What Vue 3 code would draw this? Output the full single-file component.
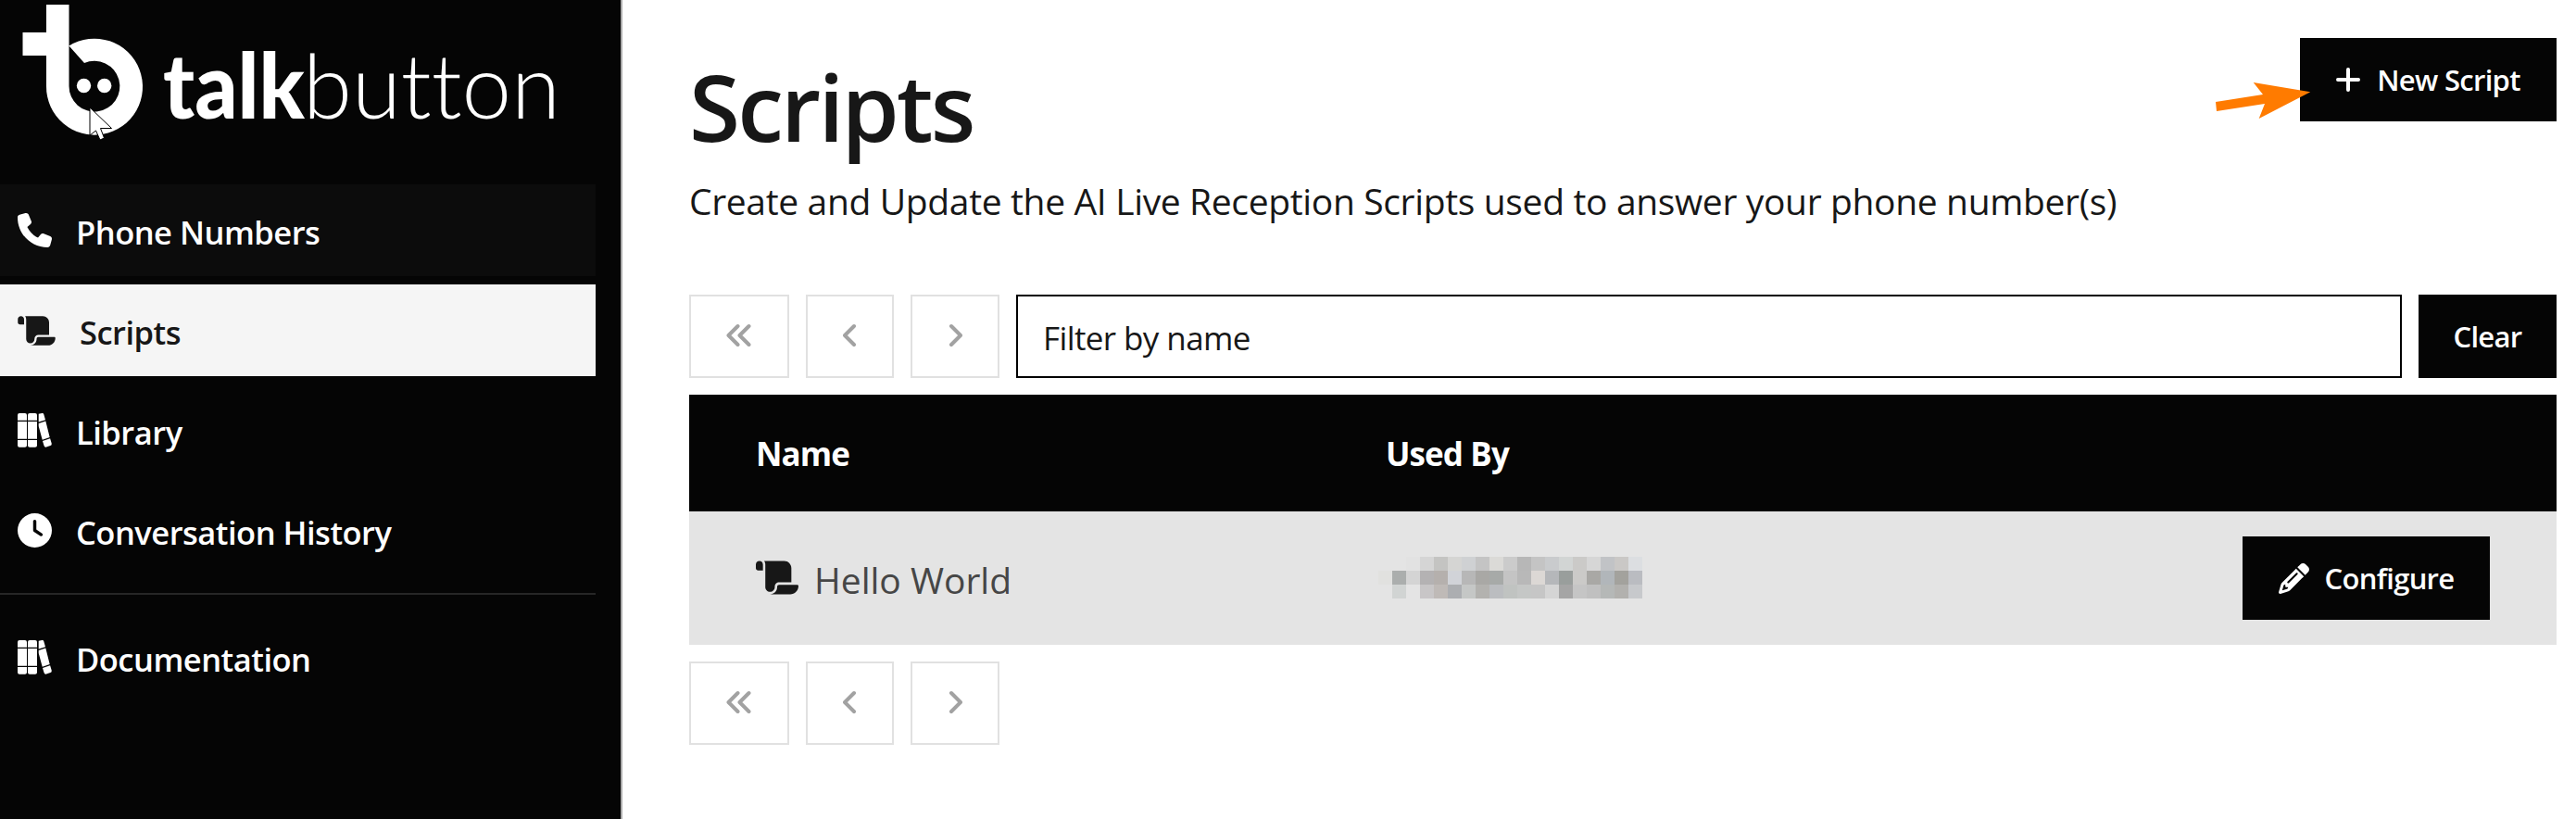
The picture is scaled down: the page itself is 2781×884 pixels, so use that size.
<template>
    <div class="layout">
        <aside class="sidebar">
            <svg class="logo" width="640" height="160" viewBox="0 0 640 160">
                <path fill="#fff" d="M50 5H74.5V93A27.4 27.4 0 1 0 91 68L74.5 49.5A52 52 0 1 1 50 93V60H24.5V35H50Z" />
                <circle cx="90.5" cy="92.5" r="7.7" fill="#fff" />
                <circle cx="112.7" cy="92.5" r="7.7" fill="#fff" />
                <path class="pointer" d="M97 116L120.5 138.5H108.5L112.5 149L108 151L103.5 141L97 146Z" />
                <text class="word bold" x="176" y="128" textLength="153" lengthAdjust="spacingAndGlyphs">talk</text>
                <text class="word light" x="327" y="128" textLength="278" lengthAdjust="spacingAndGlyphs">button</text>
            </svg>

            <nav class="menu">
                <template v-for="item in menu" :key="item.label">
                    <hr v-if="item.divided" class="divider" />
                    <a class="menu-item" :class="item.state">
                        <svg class="icon" :class="{ wide: item.icon === 'scroll' }" :viewBox="icons[item.icon].box">
                            <path :d="icons[item.icon].d" />
                        </svg>
                        <span class="menu-label">{{ item.label }}</span>
                    </a>
                </template>
            </nav>
        </aside>

        <main class="content">
            <header class="head">
                <div>
                    <h1 class="title">Scripts</h1>
                    <p class="lead">Create and Update the AI Live Reception Scripts used to answer your phone number(s)</p>
                </div>
                <button type="button" class="button new-script">
                    <svg class="plus" viewBox="0 0 26 26"><path d="M13 2V24M2 13H24" /></svg>
                    <span>New Script</span>
                    <svg class="hint-arrow" width="104" height="42" viewBox="0 0 104 42">
                        <path d="M0 21L51 13L40.700 0L102.300 10.300L46.700 39L53 23L1 31Z" />
                    </svg>
                </button>
            </header>

            <div class="toolbar">
                <button v-for="p in pages" :key="p.name" type="button" class="page" :class="p.name">
                    <svg :width="p.width" height="26" :viewBox="`0 0 ${p.width} 26`"><path :d="p.d" /></svg>
                </button>
                <input v-model="filter" class="filter" type="text" placeholder="Filter by name">
                <button type="button" class="button clear" @click="filter = ''"><span>Clear</span></button>
            </div>

            <div class="table">
                <div class="row table-head">
                    <span>Name</span>
                    <span>Used By</span>
                </div>
                <div v-for="script in filtered" :key="script" class="row table-row">
                    <div class="script-name">
                        <svg class="script-icon" :viewBox="icons.scroll.box"><path :d="icons.scroll.d" /></svg>
                        <span>{{ script }}</span>
                    </div>
                    <div class="masked">
                        <i v-for="(color, i) in mask" :key="i" :style="{ background: color }"></i>
                    </div>
                    <button type="button" class="button configure">
                        <svg class="pencil" :viewBox="icons.pencil.box"><path :d="icons.pencil.d" /></svg>
                        <span>Configure</span>
                    </button>
                </div>
            </div>

            <div class="toolbar">
                <button v-for="p in pages" :key="p.name" type="button" class="page" :class="p.name">
                    <svg :width="p.width" height="26" :viewBox="`0 0 ${p.width} 26`"><path :d="p.d" /></svg>
                </button>
            </div>
        </main>
    </div>
</template>

<script setup>
import { ref, computed } from 'vue';

const icons = {
    phone: {
        box: '0 0 512 512',
        d: 'M164.900 24.600c-7.700-18.600-28-28.500-47.400-23.200l-88 24C12.100 30.200 0 46 0 64C0 311.400 200.600 512 448 512c18 0 33.800-12.100 38.600-29.500l24-88c5.300-19.400-4.600-39.700-23.200-47.400l-96-40c-16.300-6.800-35.200-2.100-46.300 11.600L304.700 368C234.300 334.700 177.300 277.700 144 207.300L193.300 167c13.700-11.200 18.400-30 11.600-46.300l-40-96z',
    },
    scroll: {
        box: '0 0 576 512',
        d: 'M0 80v48c0 17.700 14.300 32 32 32H48 96V80c0-26.500-21.500-48-48-48S0 53.500 0 80zM112 32c10 13.400 16 30 16 48V384c0 35.300 28.700 64 64 64s64-28.700 64-64v-5.300c0-32.400 26.300-58.700 58.700-58.700H480V128c0-53-43-96-96-96H112zM464 480c61.900 0 112-50.100 112-112c0-8.800-7.200-16-16-16H314.700c-14.700 0-26.700 11.900-26.700 26.700V384c0 53-43 96-96 96H368h96z',
    },
    books: {
        box: '0 0 37 37',
        d: 'M2 0H8Q10 0 10 2V7.800H0V2Q0 0 2 0ZM0 9H10V27.800H0ZM0 29H10V34.700Q10 36.700 8 36.700H2Q0 36.700 0 34.700ZM13 0H19Q21 0 21 2V7.800H11V2Q11 0 13 0ZM11 9H21V27.800H11ZM11 29H21V34.700Q21 36.700 19 36.700H13Q11 36.700 11 34.700ZM22.700 .700L26.300 0Q27.800 -.200 28.300 1.200L30 7.200L22.700 9.500ZM22.700 10.900L30.300 8.400L34.700 26L26.700 28.700L22.700 14ZM27 29.900L35.100 27.200L36.700 32.600Q37 34.400 35.400 35L31 36.600Q29.200 37 28.600 35.300Z',
    },
    clock: {
        box: '0 0 512 512',
        d: 'M256 0a256 256 0 1 1 0 512A256 256 0 1 1 256 0zM232 120V256c0 8 4 15.500 10.700 20l96 64c11 7.400 25.900 4.400 33.300-6.700s4.400-25.900-6.700-33.300L280 243.200V120c0-13.300-10.700-24-24-24s-24 10.700-24 24z',
    },
    pencil: {
        box: '0 0 512 512',
        d: 'M410.300 231l11.300-11.300-33.900-33.900-62.100-62.100L291.700 89.800l-11.300 11.300-22.600 22.600L58.600 322.900c-10.400 10.400-18 23.300-22.200 37.400L1 480.700c-2.500 8.400-.2 17.500 6.100 23.700s15.300 8.500 23.700 6.100l120.300-35.400c14.100-4.200 27-11.800 37.400-22.200L387.700 253.700 410.300 231zM160 399.400l-9.100 22.700c-4 3.100-8.500 5.400-13.300 6.900L59.400 452l23-78.100c1.400-4.900 3.800-9.400 6.900-13.300l22.700-9.100v32c0 8.800 7.200 16 16 16h32zM362.700 18.700L348.300 33.200 325.700 55.800 314.300 67.100l33.900 33.900 62.100 62.100 33.900 33.900 11.300-11.300 22.600-22.600 14.500-14.500c25-25 25-65.500 0-90.500L453.300 18.700c-25-25-65.500-25-90.500 0zm-47.400 168l-144 144c-6.200 6.200-16.400 6.200-22.600 0s-6.200-16.400 0-22.600l144-144c6.200-6.200 16.400-6.200 22.600 0s6.200 16.400 0 22.600z',
    },
};

const menu = [
    { label: 'Phone Numbers', icon: 'phone', state: 'hovered' },
    { label: 'Scripts', icon: 'scroll', state: 'active' },
    { label: 'Library', icon: 'books' },
    { label: 'Conversation History', icon: 'clock' },
    { label: 'Documentation', icon: 'books', divided: true },
];

const pages = [
    { name: 'first', width: 28, d: 'M12.500 3L2.500 13L12.500 23M24.500 3L14.500 13L24.500 23' },
    { name: 'prev', width: 16, d: 'M12 3L2 13L12 23' },
    { name: 'next', width: 16, d: 'M4 3L14 13L4 23' },
];

const scripts = ['Hello World'];
const filter = ref('');
const filtered = computed(() =>
    scripts.filter((name) => name.toLowerCase().includes(filter.value.toLowerCase()))
);

// three rows of nineteen blocks hiding the phone number
const mask = [
    '#e4e4e4', '#e4e4e4', '#e2e2e2', '#d5d5d5', '#c4c4c2', '#d5d5d3', '#cfd1d3', '#c4c4c4', '#dbdad7', '#cbcbcb', '#b7b7b7', '#c4c4c4', '#c9cbcd', '#d2d5d4', '#cbcac8', '#d6d6d6', '#c1c3c6', '#cac8c6', '#dcdee1',
    '#e1e1df', '#abaead', '#d4d4d4', '#b4b2b3', '#b5b0ad', '#d1d3d8', '#b7b7b7', '#a9a8a5', '#a7aaa8', '#c4c4c4', '#b8b8b8', '#dcd8d5', '#b5b7ba', '#999e9c', '#cbcac8', '#a9a8a5', '#b1b6ba', '#a3a29d', '#babcc1',
    '#e4e4e4', '#d1d4d3', '#e4e4e4', '#c8c6c7', '#bfbab7', '#acaeb1', '#c5c7c6', '#b3b2af', '#bbbdc0', '#c0c3c1', '#c5c7c6', '#c6c6c6', '#d5d5d5', '#a5a5a5', '#c5c5c5', '#c0c0c0', '#b5b8b7', '#b2b1ae', '#c7c9cc',
];
</script>

<style>
body {
    background: #fff;
}
</style>

<style scoped>
.layout {
    display: flex;
    width: 100%;
    height: 884px;
    overflow: hidden;
    font-family: "Open Sans", "Noto Sans", sans-serif;
    color: #171717;
}

* {
    box-sizing: border-box;
}

.sidebar {
    flex: none;
    width: 672px;
    background: #050505;
    border-right: 2px solid #ababab;
}

.logo {
    display: block;
}

.word {
    font-family: Lato, sans-serif;
    font-size: 97px;
    font-variant-ligatures: none;
    fill: #fff;
}

.word.bold {
    font-weight: 900;
}

.word.light {
    font-weight: 300;
}

.pointer {
    fill: #fff;
    stroke: #000;
    stroke-width: 1;
}

.menu {
    display: flex;
    flex-direction: column;
    gap: 9px;
    width: 643px;
    padding-top: 39px;
}

.menu-item {
    display: flex;
    align-items: center;
    height: 99px;
    padding-left: 19px;
    gap: 26px;
    color: #fff;
    font-size: 34.5px;
    font-weight: 600;
    letter-spacing: -0.5px;
}

.menu-item.hovered {
    background: #0c0c0c;
}

.menu-item.active {
    background: #f5f5f5;
    color: #171717;
}

.divider {
    width: 100%;
    height: 2px;
    margin: 9px 0;
    border: none;
    background: #262626;
}

.icon {
    width: 37px;
    height: 37px;
    fill: currentColor;
}

.icon.wide {
    width: 41px;
    height: 36px;
}

.menu-label {
    padding-top: 4px;
    white-space: nowrap;
}

.content {
    flex: 1;
    display: flex;
    flex-direction: column;
    gap: 18px;
    padding: 41px 21px 0 72px;
}

.head {
    display: flex;
    justify-content: space-between;
    align-items: flex-start;
    height: 259px;
}

.title {
    margin: 13px 0 0;
    font-size: 100px;
    line-height: 120px;
    font-weight: 600;
    letter-spacing: -2.8px;
}

.lead {
    margin: 13px 0 0;
    font-size: 39px;
    line-height: 60px;
    letter-spacing: -0.35px;
    white-space: nowrap;
}

.button {
    position: relative;
    display: flex;
    align-items: center;
    justify-content: center;
    flex: none;
    height: 90px;
    padding: 0;
    border: none;
    border-radius: 0;
    background: #050505;
    color: #fff;
    font-family: inherit;
    font-size: 31px;
    font-weight: 600;
    letter-spacing: -0.7px;
    white-space: nowrap;
}

.new-script {
    width: 277px;
    gap: 18px;
}

.plus {
    width: 26px;
    height: 26px;
    fill: none;
    stroke: #fff;
    stroke-width: 4;
    stroke-linecap: round;
}

.hint-arrow {
    position: absolute;
    left: -91px;
    top: 48px;
    fill: #ff7b00;
}

.toolbar {
    display: flex;
    gap: 18px;
}

.page {
    display: flex;
    align-items: center;
    justify-content: center;
    flex: none;
    width: 96px;
    height: 90px;
    padding: 0 0 2px;
    border: 2px solid #e1e1e1;
    background: #fff;
}

.page.first {
    width: 108px;
}

.page.prev {
    width: 95px;
}

.page path {
    fill: none;
    stroke: #a2a2a2;
    stroke-width: 4;
    stroke-linecap: round;
    stroke-linejoin: round;
}

.filter {
    flex: 1;
    height: 90px;
    padding: 3px 27px 0;
    border: 2px solid #000;
    border-radius: 0;
    outline: none;
    font-family: inherit;
    font-size: 35px;
    letter-spacing: -0.6px;
    color: #171717;
}

.filter::placeholder {
    color: #171717;
    opacity: 1;
}

.clear {
    width: 149px;
}

.row {
    display: grid;
    grid-template-columns: 680px 1fr auto;
    align-items: center;
    padding: 0 72px;
}

.table-head {
    height: 126px;
    background: #050505;
    color: #fff;
    font-size: 35px;
    font-weight: 700;
    letter-spacing: -0.9px;
}

.table-row {
    height: 144px;
    background: #e4e4e4;
}

.script-name {
    display: flex;
    align-items: center;
    gap: 17px;
    font-size: 39px;
    color: #464646;
}

.script-name span {
    padding-top: 3px;
}

.script-icon {
    width: 46px;
    height: 41px;
    margin-bottom: 2px;
    fill: #171717;
}

.masked {
    display: grid;
    grid-template-columns: repeat(19, 15px);
    grid-auto-rows: 15px;
    margin: 0 0 1px -8px;
}

.configure {
    width: 267px;
    gap: 17px;
}

.pencil {
    width: 33px;
    height: 33px;
    fill: #fff;
}
</style>
